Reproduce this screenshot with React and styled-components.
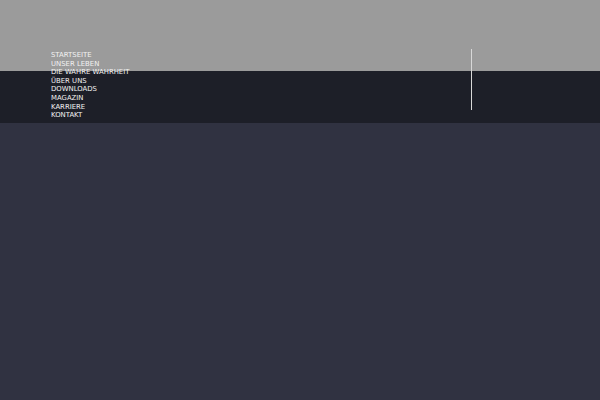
import React from 'react';
import styled, { createGlobalStyle } from 'styled-components';

const ITEMS = [
  "Startseite",
  "Unser Leben",
  "Die wahre Wahrheit",
  "Über uns",
  "Downloads",
  "Magazin",
  "Karriere",
  "Kontakt"
]

const Global = createGlobalStyle`
  html, body {
    margin: 0;
    padding: 0;
    background: #303241;
    font-family: "DejaVu Sans", sans-serif;
  }
`

const Page = styled.div`
  min-height: 400px;
  background: #303241;
`

const Header = styled.header`
  height: 123px;
  background: linear-gradient(to bottom, #9b9b9b 0, #9b9b9b 71px, #1d1f28 71px, #1d1f28 123px);
`

const Inner = styled.div`
  display: flex;
  align-items: flex-start;
  padding: 49px 128px 0 51px;
`

const Nav = styled.ul`
  list-style: none;
  margin: 0;
  padding: 2px 0 0;
`

const Item = styled.li`
  font-size: 6.9px;
  line-height: 8.6px;
  text-transform: uppercase;
  color: #f2f2f2;
`

const Divider = styled.div`
  margin-left: auto;
  width: 1px;
  height: 61px;
  background: #d8d8d8;
`

const App = () => {
  return (
    <Page>
      <Global />
      <Header>
        <Inner>
          <Nav>
            {ITEMS.map(item => <Item key={item}>{item}</Item>)}
          </Nav>
          <Divider />
        </Inner>
      </Header>
    </Page>
  )
}

export default App
